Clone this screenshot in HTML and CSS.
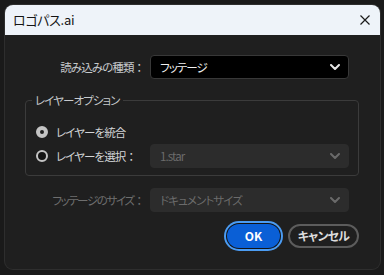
FILE: index.html
```html
<!DOCTYPE html>
<html lang="ja">
<head>
<meta charset="utf-8">
<title>ロゴパス.ai</title>
<link rel="stylesheet" href="styles.css">
</head>
<body>
<div class="dialog">
  <div class="titlebar">
    <span class="title">ロゴパス.ai</span>
    <svg class="close" width="10" height="10" viewBox="0 0 10 10"><path d="M0.5 0.5 L9.5 9.5 M9.5 0.5 L0.5 9.5" stroke="#1b1b1b" stroke-width="1.2" fill="none"/></svg>
  </div>
  <div class="content">
    <div class="row">
      <span class="label">読み込みの種類<span class="colon">：</span></span>
      <div class="select">
        <span>フッテージ</span>
        <svg class="chev" width="10" height="6" viewBox="0 0 10 6"><polyline points="1,1 5,5 9,1" fill="none" stroke="#e6e6e6" stroke-width="2" stroke-linecap="round" stroke-linejoin="round"/></svg>
      </div>
    </div>
    <fieldset class="group">
      <legend>レイヤーオプション</legend>
      <div class="radio-row">
        <span class="radio checked"></span>
        <span class="rlabel">レイヤーを統合</span>
      </div>
      <div class="radio-row">
        <span class="radio"></span>
        <span class="rlabel">レイヤーを選択<span class="colon">：</span></span>
        <div class="select disabled push">
          <span>1.star</span>
          <svg class="chev" width="10" height="6" viewBox="0 0 10 6"><polyline points="1,1 5,5 9,1" fill="none" stroke="#6a6a6a" stroke-width="2" stroke-linecap="round" stroke-linejoin="round"/></svg>
        </div>
      </div>
    </fieldset>
    <div class="row">
      <span class="label dim">フッテージのサイズ<span class="colon">：</span></span>
      <div class="select disabled">
        <span>ドキュメントサイズ</span>
        <svg class="chev" width="10" height="6" viewBox="0 0 10 6"><polyline points="1,1 5,5 9,1" fill="none" stroke="#6a6a6a" stroke-width="2" stroke-linecap="round" stroke-linejoin="round"/></svg>
      </div>
    </div>
    <div class="buttons">
      <button class="btn ok">OK</button>
      <button class="btn cancel">キャンセル</button>
    </div>
  </div>
</div>
</body>
</html>
```

FILE: styles.css
```css
html, body {
  margin: 0;
  padding: 0;
}
body {
  width: 384px;
  height: 275px;
  background: #1a1a1a;
  font-family: "Noto Sans CJK JP", "Noto Sans", sans-serif;
  font-feature-settings: "palt";
  overflow: hidden;
  padding-top: 5px;
  padding-left: 5px;
  box-sizing: border-box;
}
.dialog {
  width: 375px;
  height: 264px;
  background: #1f1f1f;
  border-radius: 8px;
  overflow: hidden;
  box-shadow: 0 0 0 1px #2e2e2e;
}
.titlebar {
  height: 30px;
  background: #eef3f9;
  display: flex;
  align-items: center;
  justify-content: space-between;
  padding: 0 10px 0 8px;
}
.title {
  font-size: 13px;
  color: #141414;
  line-height: 16px;
  letter-spacing: -0.3px;
}
.close {
  display: block;
  margin-top: -1px;
}
.content {
  padding: 20px 21px 0 20px;
}
.row {
  display: grid;
  grid-template-columns: 120px 199px;
  column-gap: 5px;
  align-items: center;
}
.label {
  text-align: right;
  font-size: 11.5px;
  color: #c6c9cc;
  line-height: 16px;
  letter-spacing: -0.9px;
}
.colon {
  font-feature-settings: normal;
  letter-spacing: 0;
}
.label.dim {
  color: #6e6e6e;
  letter-spacing: -1.4px;
}
.select {
  box-sizing: border-box;
  width: 199px;
  height: 24px;
  background: #000;
  border: 1px solid #383838;
  border-radius: 4px;
  display: flex;
  align-items: center;
  justify-content: space-between;
  padding: 0 8px 0 9px;
  font-size: 11.5px;
  letter-spacing: -0.9px;
  color: #f0f0f0;
}
.select.disabled {
  background: #2c2c2c;
  border-color: #2c2c2c;
  color: #6b6b6b;
}
.chev {
  display: block;
}
.group {
  margin: 13px 0 0 0;
  padding: 12px 9px 7px 10px;
  border: 1px solid #3b3b3b;
  border-radius: 4px;
}
.group legend {
  font-size: 11.5px;
  line-height: 16px;
  color: #c6c9cc;
  padding: 0 3px;
  margin-left: -4px;
  letter-spacing: -0.9px;
}
.radio-row {
  display: flex;
  align-items: center;
  height: 24px;
}
.radio {
  box-sizing: border-box;
  width: 12px;
  height: 12px;
  border-radius: 50%;
  border: 2px solid #c4c4c4;
  background: #141414;
  flex: none;
}
.radio.checked {
  border-width: 4px;
  background: #1f1f1f;
}
.rlabel {
  margin-left: 8px;
  font-size: 11.5px;
  color: #d2d4d6;
  line-height: 16px;
  letter-spacing: -0.9px;
}
.push {
  margin-left: auto;
  margin-top: -1px;
}
.group + .row {
  margin-top: 12px;
}
.buttons {
  display: flex;
  justify-content: flex-end;
  gap: 8px;
  margin-top: 12px;
}
.btn {
  box-sizing: border-box;
  height: 24px;
  border-radius: 12px;
  font-family: "Noto Sans CJK JP", "Noto Sans", sans-serif;
  font-feature-settings: "palt";
  font-size: 12px;
  font-weight: bold;
  line-height: 16px;
  padding: 0;
  cursor: pointer;
}
.ok {
  width: 53px;
  background: #0a5fd6;
  color: #fff;
  border: none;
  box-shadow: 0 0 0 1px #121212, 0 0 0 3px #4b9cf3;
}
.cancel {
  width: 71px;
  background: transparent;
  color: #dcdcdc;
  border: 2px solid #5c5c5c;
  letter-spacing: -0.8px;
}
```
